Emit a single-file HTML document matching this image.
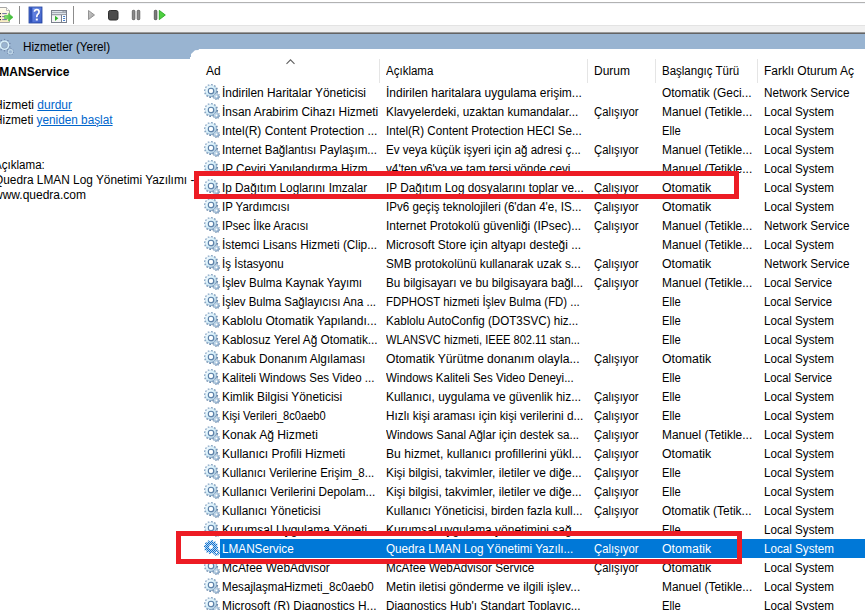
<!DOCTYPE html>
<html><head><meta charset="utf-8">
<style>
*{margin:0;padding:0;box-sizing:border-box}
html,body{width:865px;height:610px;overflow:hidden;background:#fff}
body{position:relative;font-family:"Liberation Sans",sans-serif;font-size:12px;color:#000}
.abs{position:absolute}
#tb{left:0;top:0;width:865px;height:34px;background:#fff}
#hdr{left:0;top:34px;width:865px;height:25px;background:#99B4D1}
#list{left:190px;top:49px;width:675px;height:561px;background:#fff;clip-path:polygon(0 8px,1px 8px,1px 5px,5px 1.2px,8.5px 1px,9px 0,100% 0,100% 100%,0 100%)}
.t{position:absolute;white-space:nowrap;line-height:15px}
.sep{position:absolute;top:59px;width:1px;height:24px;background:#E5E5E5}
.row{position:absolute;left:0;width:865px;height:19px}
.row span{position:absolute;top:3px;transform-origin:0 0;white-space:nowrap;line-height:15px}
.c1{left:222px}.c2{left:386px}.c3{left:594px}.c4{left:662px}.c5{left:764px}
.ic{position:absolute;left:204px;top:1px;width:17px;height:17px}
.hl{position:absolute;left:220px;top:0;width:645px;height:19px;background:#0078D7}
.sel span{color:#fff}
.red{position:absolute;border:5px solid #ED1C24}
a{color:#0066CC;text-decoration:underline}
</style></head><body>
<div id="tb" class="abs">
  <div class="abs" style="left:0;top:2px;width:865px;height:1px;background:#B2B2B2"></div><div class="abs" style="left:0;top:3px;width:865px;height:1px;background:#F3F5F9"></div>
  <div class="abs" style="left:0;top:25px;width:865px;height:1px;background:#E3E3E3"></div>
  <div class="abs" style="left:0;top:26px;width:865px;height:6px;background:#F0F0F0"></div>
  <div class="abs" style="left:0;top:32px;width:865px;height:1px;background:#9A9A9A"></div>
  <div class="abs" style="left:0;top:33px;width:865px;height:1px;background:#646464"></div>
</div>
<svg class="abs" style="left:0;top:0" width="180" height="26" viewBox="0 0 180 26">
<defs>
<linearGradient id="doc" x1="0" y1="0" x2="0" y2="1"><stop offset="0" stop-color="#fffdf2"/><stop offset="1" stop-color="#f7ebbd"/></linearGradient>
<linearGradient id="hlp" x1="0" y1="0" x2="1" y2="1"><stop offset="0" stop-color="#7a9af0"/><stop offset="1" stop-color="#3a5cc8"/></linearGradient>
<linearGradient id="gry" x1="0" y1="0" x2="1" y2="1"><stop offset="0" stop-color="#d0d0d0"/><stop offset="1" stop-color="#9a9a9a"/></linearGradient>
<linearGradient id="grn" x1="0" y1="0" x2="1" y2="0"><stop offset="0" stop-color="#8ee07a"/><stop offset="1" stop-color="#2eb52a"/></linearGradient>
</defs>
<path d="M-2 7.5 H6.5 L9.5 10.5 V22.5 H-2 Z" fill="url(#doc)" stroke="#a6a6a6" stroke-width="1"/>
<path d="M6.5 7.5 V10.5 H9.5" fill="#fff" stroke="#a6a6a6" stroke-width="0.8"/>
<rect x="0" y="13" width="0.9" height="1.2" fill="#222"/><rect x="0" y="16" width="0.9" height="1.2" fill="#222"/><rect x="0" y="19" width="0.9" height="1.2" fill="#222"/>
<rect x="2.2" y="13" width="4.6" height="1.1" fill="#7a78a8"/><rect x="2.2" y="16" width="4.6" height="1.1" fill="#7a78a8"/><rect x="2.2" y="19" width="4.6" height="1.1" fill="#7a78a8"/>
<path d="M4.6 15.6 H8.6 V13.4 L13 17.3 L8.6 21 V18.8 H4.6 Z" fill="url(#grn)" stroke="#3fbf35" stroke-width="0.6"/>
<rect x="19" y="6" width="1" height="18" fill="#8c8c8c"/>
<rect x="29" y="7" width="13" height="16" fill="url(#hlp)"/>
<rect x="29" y="7" width="13" height="16" fill="none" stroke="#1f3f9a" stroke-width="0.8"/>
<rect x="29.4" y="7.4" width="3" height="15.2" fill="#2c4fb5"/>
<path d="M35.2 12.8 Q36 14 38 13.3 Q40 12.3 39.6 10.9 Q39 9 36.8 9.2 Q34.6 9.4 34.4 11.8" fill="none" stroke="#2a3f80" stroke-width="0" /><path d="M34.5 11.8 Q34.6 9.6 36.8 9.6 Q39.1 9.6 39.1 11.9 Q39.1 13.5 37.6 14.5 Q36.8 15.1 36.8 17.2" fill="none" stroke="#33448a" stroke-width="1.6" transform="translate(0.6,0.5)" opacity="0.5"/><path d="M34.5 11.8 Q34.6 9.6 36.8 9.6 Q39.1 9.6 39.1 11.9 Q39.1 13.5 37.6 14.5 Q36.8 15.1 36.8 17.2" fill="none" stroke="#fff" stroke-width="1.7"/>
<rect x="35.8" y="18.6" width="2" height="1.9" fill="#fff"/>
<rect x="51.5" y="10.5" width="15" height="12" fill="#f5f5f5" stroke="#7a808c" stroke-width="1"/>
<rect x="52" y="11" width="14" height="1.4" fill="#dde3ea"/>
<rect x="62.6" y="11.1" width="1" height="1.1" fill="#7a808c"/><rect x="64.6" y="11.1" width="1" height="1.1" fill="#7a808c"/>
<rect x="52" y="12.4" width="14" height="0.8" fill="#7a808c"/>
<rect x="52" y="13.2" width="14" height="1.1" fill="#dde3ea"/>
<rect x="52" y="14.3" width="14" height="0.9" fill="#7a808c"/>
<rect x="61" y="15" width="1" height="7.5" fill="#7a808c"/>
<rect x="62" y="15.2" width="4" height="6.8" fill="#fff"/>
<path d="M55 15.8 L58.3 18.3 L55 20.9 Z" fill="#2fb229"/>
<rect x="63" y="16" width="2.2" height="1" rx="0.5" fill="#3a78c8"/><rect x="63" y="18" width="2.2" height="1" rx="0.5" fill="#3a78c8"/><rect x="63" y="20" width="2.2" height="1" rx="0.5" fill="#3a78c8"/>
<rect x="73" y="6" width="1" height="18" fill="#8c8c8c"/>
<path d="M88.5 10.5 L94.5 15 L88.5 19.5 Z" fill="url(#gry)" stroke="#8a8a8a" stroke-width="0.9" stroke-linejoin="round"/>
<rect x="108.5" y="10.5" width="9.5" height="9.5" rx="1.8" fill="#4c4c4c" stroke="#2e2e2e" stroke-width="1"/>
<rect x="132.3" y="10.3" width="2.6" height="9.4" rx="0.8" fill="#8a8a8a" stroke="#5a5a5a" stroke-width="0.8"/>
<rect x="137.2" y="10.3" width="2.6" height="9.4" rx="0.8" fill="#8a8a8a" stroke="#5a5a5a" stroke-width="0.8"/>
<rect x="154.3" y="10.3" width="2.6" height="9.4" rx="0.8" fill="#7a7a7a" stroke="#4e4e4e" stroke-width="0.8"/>
<path d="M159.3 10.4 L165.3 15 L159.3 19.6 Z" fill="#4ed040" stroke="#26a81f" stroke-width="0.9" stroke-linejoin="round"/>
</svg>
<div id="hdr" class="abs"></div>
<svg class="abs" style="left:0;top:34px" width="16" height="25" viewBox="0 34 16 25"><circle cx="9.85" cy="43.55" r="0.75" fill="#6f84a6"/><circle cx="9.80" cy="47.01" r="0.75" fill="#6f84a6"/><circle cx="7.73" cy="49.78" r="0.75" fill="#6f84a6"/><circle cx="4.42" cy="50.80" r="0.75" fill="#6f84a6"/><circle cx="1.14" cy="49.68" r="0.75" fill="#6f84a6"/><circle cx="-0.85" cy="46.85" r="0.75" fill="#6f84a6"/><circle cx="-0.80" cy="43.39" r="0.75" fill="#6f84a6"/><circle cx="1.27" cy="40.62" r="0.75" fill="#6f84a6"/><circle cx="4.58" cy="39.60" r="0.75" fill="#6f84a6"/><circle cx="7.86" cy="40.72" r="0.75" fill="#6f84a6"/>
<circle cx="4.5" cy="45.2" r="4.0" fill="none" stroke="#d9f1fb" stroke-width="1.6"/>
<circle cx="4.5" cy="45.2" r="3.1" fill="none" stroke="#8a8f9a" stroke-width="0.5" opacity="0.7"/>
<circle cx="13.44" cy="52.32" r="0.55" fill="#6f84a6"/><circle cx="12.11" cy="54.28" r="0.55" fill="#6f84a6"/><circle cx="9.78" cy="54.74" r="0.55" fill="#6f84a6"/><circle cx="7.82" cy="53.41" r="0.55" fill="#6f84a6"/><circle cx="7.36" cy="51.08" r="0.55" fill="#6f84a6"/><circle cx="8.69" cy="49.12" r="0.55" fill="#6f84a6"/><circle cx="11.02" cy="48.66" r="0.55" fill="#6f84a6"/><circle cx="12.98" cy="49.99" r="0.55" fill="#6f84a6"/><circle cx="10.4" cy="51.7" r="2.1" fill="none" stroke="#c2d9e8" stroke-width="1.1"/>
</svg>
<div class="t" style="left:23px;top:40px;transform:scaleX(0.98);transform-origin:0 0">Hizmetler (Yerel)</div>
<div id="list" class="abs"></div>
<div class="sep" style="left:379px"></div>
<div class="sep" style="left:587px"></div>
<div class="sep" style="left:655px"></div>
<div class="sep" style="left:757px"></div>
<svg class="abs" style="left:280px;top:55px" width="20" height="12" viewBox="280 55 20 12"><polyline points="286.5,63.8 290.5,59.8 294.5,63.8" fill="none" stroke="#606060" stroke-width="1.1"/></svg>
<div class="t" style="left:206px;top:64px">Ad</div>
<div class="t" style="left:386px;top:64px;transform:scaleX(0.96);transform-origin:0 0">Açıklama</div>
<div class="t" style="left:594px;top:64px">Durum</div>
<div class="t" style="left:662px;top:64px;transform:scaleX(0.958);transform-origin:0 0">Başlangıç Türü</div>
<div class="t" style="left:764px;top:64px">Farklı Oturum Aç</div>
<div class="t" style="left:-8px;top:65px;font-weight:bold">LMANService</div>
<div class="t" style="left:-6px;top:98px">Hizmeti <a>durdur</a></div>
<div class="t" style="left:-6px;top:113px;transform:scaleX(0.982);transform-origin:0 0">Hizmeti <a>yeniden başlat</a></div>
<div class="t" style="left:-6px;top:158px;transform:scaleX(0.965);transform-origin:0 0">Açıklama:</div>
<div class="t" style="left:-6px;top:173px;transform:scaleX(0.988);transform-origin:0 0">Quedra LMAN Log Yönetimi Yazılımı -</div>
<div class="t" style="left:-6px;top:188px">www.quedra.com</div>
<svg width="0" height="0" style="position:absolute">
<defs>
<radialGradient id="rg" cx="0.45" cy="0.42" r="0.58">
<stop offset="0" stop-color="#ffffff"/><stop offset="0.5" stop-color="#dcf3fc"/><stop offset="0.75" stop-color="#acd0e8"/><stop offset="1" stop-color="#7599bf"/>
</radialGradient>
<linearGradient id="lgT" x1="0" y1="0" x2="1" y2="1"><stop offset="0" stop-color="#a9c4dc"/><stop offset="1" stop-color="#4d6d93"/></linearGradient>
<linearGradient id="lgB" x1="0.15" y1="0.15" x2="0.9" y2="0.9"><stop offset="0" stop-color="#f2fbff"/><stop offset="0.45" stop-color="#c9e9f7"/><stop offset="1" stop-color="#6a8db3"/></linearGradient>
<linearGradient id="lgS" x1="0" y1="0" x2="1" y2="1"><stop offset="0" stop-color="#d8ecf7"/><stop offset="1" stop-color="#7a9bbf"/></linearGradient>
<radialGradient id="rg2" cx="0.5" cy="0.5" r="0.5">
<stop offset="0" stop-color="#f4fbfe"/><stop offset="0.55" stop-color="#c3def0"/><stop offset="1" stop-color="#8aaccc"/>
</radialGradient>
<pattern id="chk" width="2" height="2" patternUnits="userSpaceOnUse" x="0" y="0"><rect width="2" height="2" fill="#b9d6ef"/><rect width="1" height="1" fill="#0a6fd0"/><rect x="1" y="1" width="1" height="1" fill="#0a6fd0"/></pattern>
<g id="g">
<path d="M12.49 6.76 L14.10 7.07 L13.88 8.76 L12.25 8.64 L11.88 9.54 L13.11 10.61 L12.08 11.96 L10.73 11.05 L9.95 11.64 L10.49 13.18 L8.92 13.84 L8.20 12.37 L7.24 12.49 L6.93 14.10 L5.24 13.88 L5.36 12.25 L4.46 11.88 L3.39 13.11 L2.04 12.08 L2.95 10.73 L2.36 9.95 L0.82 10.49 L0.16 8.92 L1.63 8.20 L1.51 7.24 L-0.10 6.93 L0.12 5.24 L1.75 5.36 L2.12 4.46 L0.89 3.39 L1.92 2.04 L3.27 2.95 L4.05 2.36 L3.51 0.82 L5.08 0.16 L5.80 1.63 L6.76 1.51 L7.07 -0.10 L8.76 0.12 L8.64 1.75 L9.54 2.12 L10.61 0.89 L11.96 1.92 L11.05 3.27 L11.64 4.05 L13.18 3.51 L13.84 5.08 L12.37 5.80 Z" fill="url(#lgT)"/>
<circle cx="7" cy="7" r="5.7" fill="url(#lgB)"/>
<circle cx="7" cy="7" r="4.2" fill="none" stroke="#e8f8fe" stroke-width="1" opacity="0.8"/>
<circle cx="7" cy="7" r="2.7" fill="none" stroke="#5d7fa6" stroke-width="1.1"/>
<circle cx="7" cy="7" r="2.0" fill="#fff"/>
<path d="M15.00 12.35 L16.10 12.57 L15.84 13.84 L14.74 13.61 L14.37 14.16 L15.00 15.09 L13.92 15.81 L13.30 14.87 L12.65 15.00 L12.43 16.10 L11.16 15.84 L11.39 14.74 L10.84 14.37 L9.91 15.00 L9.19 13.92 L10.13 13.30 L10.00 12.65 L8.90 12.43 L9.16 11.16 L10.26 11.39 L10.63 10.84 L10.00 9.91 L11.08 9.19 L11.70 10.13 L12.35 10.00 L12.57 8.90 L13.84 9.16 L13.61 10.26 L14.16 10.63 L15.09 10.00 L15.81 11.08 L14.87 11.70 Z" fill="url(#lgT)"/>
<circle cx="12.5" cy="12.5" r="2.6" fill="url(#lgS)"/>
<circle cx="12.5" cy="12.5" r="1" fill="#fff"/>
</g>
<g id="gs">
<path d="M12.49 6.76 L14.10 7.07 L13.88 8.76 L12.25 8.64 L11.88 9.54 L13.11 10.61 L12.08 11.96 L10.73 11.05 L9.95 11.64 L10.49 13.18 L8.92 13.84 L8.20 12.37 L7.24 12.49 L6.93 14.10 L5.24 13.88 L5.36 12.25 L4.46 11.88 L3.39 13.11 L2.04 12.08 L2.95 10.73 L2.36 9.95 L0.82 10.49 L0.16 8.92 L1.63 8.20 L1.51 7.24 L-0.10 6.93 L0.12 5.24 L1.75 5.36 L2.12 4.46 L0.89 3.39 L1.92 2.04 L3.27 2.95 L4.05 2.36 L3.51 0.82 L5.08 0.16 L5.80 1.63 L6.76 1.51 L7.07 -0.10 L8.76 0.12 L8.64 1.75 L9.54 2.12 L10.61 0.89 L11.96 1.92 L11.05 3.27 L11.64 4.05 L13.18 3.51 L13.84 5.08 L12.37 5.80 Z" fill="url(#chk)"/>
<circle cx="7" cy="7" r="5.7" fill="url(#chk)"/>
<circle cx="7" cy="7" r="2.0" fill="#fff"/>
<path d="M15.00 12.35 L16.10 12.57 L15.84 13.84 L14.74 13.61 L14.37 14.16 L15.00 15.09 L13.92 15.81 L13.30 14.87 L12.65 15.00 L12.43 16.10 L11.16 15.84 L11.39 14.74 L10.84 14.37 L9.91 15.00 L9.19 13.92 L10.13 13.30 L10.00 12.65 L8.90 12.43 L9.16 11.16 L10.26 11.39 L10.63 10.84 L10.00 9.91 L11.08 9.19 L11.70 10.13 L12.35 10.00 L12.57 8.90 L13.84 9.16 L13.61 10.26 L14.16 10.63 L15.09 10.00 L15.81 11.08 L14.87 11.70 Z" fill="url(#chk)"/>
<circle cx="12.5" cy="12.5" r="1" fill="#fff"/>
</g>
</defs></svg>
<div class="row" style="top:83px"><svg class="ic" viewBox="0 0 17 17"><use href="#g"/></svg><span class="c1" style="transform:scaleX(0.9917)">İndirilen Haritalar Yöneticisi</span><span class="c2" style="transform:scaleX(0.9985)">İndirilen haritalara uygulama erişim...</span><span class="c4" style="transform:scaleX(0.9944)">Otomatik (Geci...</span><span class="c5" style="transform:scaleX(0.9779)">Network Service</span></div>
<div class="row" style="top:102px"><svg class="ic" viewBox="0 0 17 17"><use href="#g"/></svg><span class="c1" style="transform:scaleX(0.9929)">İnsan Arabirim Cihazı Hizmeti</span><span class="c2" style="transform:scaleX(0.9839)">Klavyelerdeki, uzaktan kumandalar...</span><span class="c3" style="transform:scaleX(0.9404)">Çalışıyor</span><span class="c4" style="transform:scaleX(0.9944)">Manuel (Tetikle...</span><span class="c5" style="transform:scaleX(0.9700)">Local System</span></div>
<div class="row" style="top:121px"><svg class="ic" viewBox="0 0 17 17"><use href="#g"/></svg><span class="c1" style="transform:scaleX(1.0000)">Intel(R) Content Protection ...</span><span class="c2" style="transform:scaleX(0.9685)">Intel(R) Content Protection HECI Se...</span><span class="c4" style="transform:scaleX(0.9316)">Elle</span><span class="c5" style="transform:scaleX(0.9700)">Local System</span></div>
<div class="row" style="top:140px"><svg class="ic" viewBox="0 0 17 17"><use href="#g"/></svg><span class="c1" style="transform:scaleX(0.9684)">Internet Bağlantısı Paylaşım...</span><span class="c2" style="transform:scaleX(0.9640)">Ev veya küçük işyeri için ağ adresi ç...</span><span class="c3" style="transform:scaleX(0.9404)">Çalışıyor</span><span class="c4" style="transform:scaleX(0.9944)">Manuel (Tetikle...</span><span class="c5" style="transform:scaleX(0.9700)">Local System</span></div>
<div class="row" style="top:159px"><svg class="ic" viewBox="0 0 17 17"><use href="#g"/></svg><span class="c1" style="transform:scaleX(0.9745)">IP Çeviri Yapılandırma Hizm...</span><span class="c2" style="transform:scaleX(0.9773)">v4'ten v6'ya ve tam tersi yönde çevi...</span><span class="c4" style="transform:scaleX(0.9944)">Manuel (Tetikle...</span><span class="c5" style="transform:scaleX(0.9700)">Local System</span></div>
<div class="row" style="top:178px"><svg class="ic" viewBox="0 0 17 17"><use href="#g"/></svg><span class="c1" style="transform:scaleX(0.9810)">Ip Dağıtım Loglarını Imzalar</span><span class="c2" style="transform:scaleX(0.9829)">IP Dağıtım Log dosyalarını toplar ve...</span><span class="c3" style="transform:scaleX(0.9404)">Çalışıyor</span><span class="c4" style="transform:scaleX(1.0250)">Otomatik</span><span class="c5" style="transform:scaleX(0.9700)">Local System</span></div>
<div class="row" style="top:197px"><svg class="ic" viewBox="0 0 17 17"><use href="#g"/></svg><span class="c1" style="transform:scaleX(0.9565)">IP Yardımcısı</span><span class="c2" style="transform:scaleX(0.9670)">IPv6 geçiş teknolojileri (6'dan 4'e, IS...</span><span class="c3" style="transform:scaleX(0.9404)">Çalışıyor</span><span class="c4" style="transform:scaleX(1.0250)">Otomatik</span><span class="c5" style="transform:scaleX(0.9700)">Local System</span></div>
<div class="row" style="top:216px"><svg class="ic" viewBox="0 0 17 17"><use href="#g"/></svg><span class="c1" style="transform:scaleX(0.9389)">IPsec İlke Aracısı</span><span class="c2" style="transform:scaleX(0.9918)">Internet Protokolü güvenliği (IPsec)...</span><span class="c3" style="transform:scaleX(0.9404)">Çalışıyor</span><span class="c4" style="transform:scaleX(0.9944)">Manuel (Tetikle...</span><span class="c5" style="transform:scaleX(0.9779)">Network Service</span></div>
<div class="row" style="top:235px"><svg class="ic" viewBox="0 0 17 17"><use href="#g"/></svg><span class="c1" style="transform:scaleX(0.9852)">İstemci Lisans Hizmeti (Clip...</span><span class="c2" style="transform:scaleX(0.9954)">Microsoft Store için altyapı desteği ...</span><span class="c4" style="transform:scaleX(0.9944)">Manuel (Tetikle...</span><span class="c5" style="transform:scaleX(0.9700)">Local System</span></div>
<div class="row" style="top:254px"><svg class="ic" viewBox="0 0 17 17"><use href="#g"/></svg><span class="c1" style="transform:scaleX(0.9629)">İş İstasyonu</span><span class="c2" style="transform:scaleX(0.9827)">SMB protokolünü kullanarak uzak s...</span><span class="c3" style="transform:scaleX(0.9404)">Çalışıyor</span><span class="c4" style="transform:scaleX(1.0250)">Otomatik</span><span class="c5" style="transform:scaleX(0.9779)">Network Service</span></div>
<div class="row" style="top:273px"><svg class="ic" viewBox="0 0 17 17"><use href="#g"/></svg><span class="c1" style="transform:scaleX(0.9664)">İşlev Bulma Kaynak Yayımı</span><span class="c2" style="transform:scaleX(0.9784)">Bu bilgisayarı ve bu bilgisayara bağl...</span><span class="c3" style="transform:scaleX(0.9404)">Çalışıyor</span><span class="c4" style="transform:scaleX(0.9944)">Manuel (Tetikle...</span><span class="c5" style="transform:scaleX(0.9437)">Local Service</span></div>
<div class="row" style="top:292px"><svg class="ic" viewBox="0 0 17 17"><use href="#g"/></svg><span class="c1" style="transform:scaleX(0.9541)">İşlev Bulma Sağlayıcısı Ana ...</span><span class="c2" style="transform:scaleX(0.9473)">FDPHOST hizmeti İşlev Bulma (FD) ...</span><span class="c4" style="transform:scaleX(0.9316)">Elle</span><span class="c5" style="transform:scaleX(0.9437)">Local Service</span></div>
<div class="row" style="top:311px"><svg class="ic" viewBox="0 0 17 17"><use href="#g"/></svg><span class="c1" style="transform:scaleX(1.0033)">Kablolu Otomatik Yapılandı...</span><span class="c2" style="transform:scaleX(0.9675)">Kablolu AutoConfig (DOT3SVC) hiz...</span><span class="c4" style="transform:scaleX(0.9316)">Elle</span><span class="c5" style="transform:scaleX(0.9700)">Local System</span></div>
<div class="row" style="top:330px"><svg class="ic" viewBox="0 0 17 17"><use href="#g"/></svg><span class="c1" style="transform:scaleX(0.9846)">Kablosuz Yerel Ağ Otomatik...</span><span class="c2" style="transform:scaleX(0.9239)">WLANSVC hizmeti, IEEE 802.11 stan...</span><span class="c4" style="transform:scaleX(0.9316)">Elle</span><span class="c5" style="transform:scaleX(0.9700)">Local System</span></div>
<div class="row" style="top:349px"><svg class="ic" viewBox="0 0 17 17"><use href="#g"/></svg><span class="c1" style="transform:scaleX(0.9895)">Kabuk Donanım Algılaması</span><span class="c2" style="transform:scaleX(1.0121)">Otomatik Yürütme donanım olayla...</span><span class="c3" style="transform:scaleX(0.9404)">Çalışıyor</span><span class="c4" style="transform:scaleX(1.0250)">Otomatik</span><span class="c5" style="transform:scaleX(0.9700)">Local System</span></div>
<div class="row" style="top:368px"><svg class="ic" viewBox="0 0 17 17"><use href="#g"/></svg><span class="c1" style="transform:scaleX(0.9618)">Kaliteli Windows Ses Video ...</span><span class="c2" style="transform:scaleX(0.9585)">Windows Kaliteli Ses Video Deneyi...</span><span class="c4" style="transform:scaleX(0.9316)">Elle</span><span class="c5" style="transform:scaleX(0.9437)">Local Service</span></div>
<div class="row" style="top:387px"><svg class="ic" viewBox="0 0 17 17"><use href="#g"/></svg><span class="c1" style="transform:scaleX(0.9917)">Kimlik Bilgisi Yöneticisi</span><span class="c2" style="transform:scaleX(0.9913)">Kullanıcı, uygulama ve güvenlik hiz...</span><span class="c3" style="transform:scaleX(0.9404)">Çalışıyor</span><span class="c4" style="transform:scaleX(0.9316)">Elle</span><span class="c5" style="transform:scaleX(0.9700)">Local System</span></div>
<div class="row" style="top:406px"><svg class="ic" viewBox="0 0 17 17"><use href="#g"/></svg><span class="c1" style="transform:scaleX(0.9252)">Kişi Verileri_8c0aeb0</span><span class="c2" style="transform:scaleX(0.9799)">Hızlı kişi araması için kişi verilerini d...</span><span class="c3" style="transform:scaleX(0.9404)">Çalışıyor</span><span class="c4" style="transform:scaleX(0.9316)">Elle</span><span class="c5" style="transform:scaleX(0.9700)">Local System</span></div>
<div class="row" style="top:425px"><svg class="ic" viewBox="0 0 17 17"><use href="#g"/></svg><span class="c1" style="transform:scaleX(1.0118)">Konak Ağ Hizmeti</span><span class="c2" style="transform:scaleX(0.9682)">Windows Sanal Ağlar için destek sa...</span><span class="c3" style="transform:scaleX(0.9404)">Çalışıyor</span><span class="c4" style="transform:scaleX(0.9944)">Manuel (Tetikle...</span><span class="c5" style="transform:scaleX(0.9700)">Local System</span></div>
<div class="row" style="top:444px"><svg class="ic" viewBox="0 0 17 17"><use href="#g"/></svg><span class="c1" style="transform:scaleX(1.0033)">Kullanıcı Profili Hizmeti</span><span class="c2" style="transform:scaleX(1.0120)">Bu hizmet, kullanıcı profillerini yükl...</span><span class="c3" style="transform:scaleX(0.9404)">Çalışıyor</span><span class="c4" style="transform:scaleX(1.0250)">Otomatik</span><span class="c5" style="transform:scaleX(0.9700)">Local System</span></div>
<div class="row" style="top:463px"><svg class="ic" viewBox="0 0 17 17"><use href="#g"/></svg><span class="c1" style="transform:scaleX(0.9554)">Kullanıcı Verilerine Erişim_8...</span><span class="c2" style="transform:scaleX(0.9944)">Kişi bilgisi, takvimler, iletiler ve diğe...</span><span class="c3" style="transform:scaleX(0.9404)">Çalışıyor</span><span class="c4" style="transform:scaleX(0.9316)">Elle</span><span class="c5" style="transform:scaleX(0.9700)">Local System</span></div>
<div class="row" style="top:482px"><svg class="ic" viewBox="0 0 17 17"><use href="#g"/></svg><span class="c1" style="transform:scaleX(0.9781)">Kullanıcı Verilerini Depolam...</span><span class="c2" style="transform:scaleX(0.9944)">Kişi bilgisi, takvimler, iletiler ve diğe...</span><span class="c3" style="transform:scaleX(0.9404)">Çalışıyor</span><span class="c4" style="transform:scaleX(0.9316)">Elle</span><span class="c5" style="transform:scaleX(0.9700)">Local System</span></div>
<div class="row" style="top:501px"><svg class="ic" viewBox="0 0 17 17"><use href="#g"/></svg><span class="c1" style="transform:scaleX(0.9808)">Kullanıcı Yöneticisi</span><span class="c2" style="transform:scaleX(0.9799)">Kullanıcı Yöneticisi, birden fazla kull...</span><span class="c3" style="transform:scaleX(0.9404)">Çalışıyor</span><span class="c4" style="transform:scaleX(0.9944)">Otomatik (Tetik...</span><span class="c5" style="transform:scaleX(0.9700)">Local System</span></div>
<div class="row" style="top:520px"><svg class="ic" viewBox="0 0 17 17"><use href="#g"/></svg><span class="c1" style="transform:scaleX(1.0000)">Kurumsal Uygulama Yöneti...</span><span class="c2" style="transform:scaleX(0.9974)">Kurumsal uygulama yönetimini sağ...</span><span class="c4" style="transform:scaleX(0.9316)">Elle</span><span class="c5" style="transform:scaleX(0.9700)">Local System</span></div>
<div class="row sel" style="top:539px"><div class="hl"></div><svg class="ic" viewBox="0 0 17 17"><use href="#gs"/></svg><span class="c1" style="transform:scaleX(0.9778)">LMANService</span><span class="c2" style="transform:scaleX(0.9749)">Quedra LMAN Log Yönetimi Yazılı...</span><span class="c3" style="transform:scaleX(0.9404)">Çalışıyor</span><span class="c4" style="transform:scaleX(1.0250)">Otomatik</span><span class="c5" style="transform:scaleX(0.9700)">Local System</span></div>
<div class="row" style="top:558px"><svg class="ic" viewBox="0 0 17 17"><use href="#g"/></svg><span class="c1" style="transform:scaleX(0.9935)">McAfee WebAdvisor</span><span class="c2" style="transform:scaleX(0.9768)">McAfee WebAdvisor Service</span><span class="c3" style="transform:scaleX(0.9404)">Çalışıyor</span><span class="c4" style="transform:scaleX(1.0250)">Otomatik</span><span class="c5" style="transform:scaleX(0.9700)">Local System</span></div>
<div class="row" style="top:577px"><svg class="ic" viewBox="0 0 17 17"><use href="#g"/></svg><span class="c1" style="transform:scaleX(0.9671)">MesajlaşmaHizmeti_8c0aeb0</span><span class="c2" style="transform:scaleX(1.0094)">Metin iletisi gönderme ve ilgili işlev...</span><span class="c4" style="transform:scaleX(0.9944)">Manuel (Tetikle...</span><span class="c5" style="transform:scaleX(0.9700)">Local System</span></div>
<div class="row" style="top:596px"><svg class="ic" viewBox="0 0 17 17"><use href="#g"/></svg><span class="c1" style="transform:scaleX(0.9903)">Microsoft (R) Diagnostics H...</span><span class="c2" style="transform:scaleX(0.9787)">Diagnostics Hub'ı Standart Toplayıc...</span><span class="c4" style="transform:scaleX(0.9316)">Elle</span><span class="c5" style="transform:scaleX(0.9700)">Local System</span></div>
<div class="red" style="left:194px;top:171px;width:545px;height:28px"></div>
<div class="red" style="left:176px;top:531px;width:566px;height:33px"></div>
</body></html>
